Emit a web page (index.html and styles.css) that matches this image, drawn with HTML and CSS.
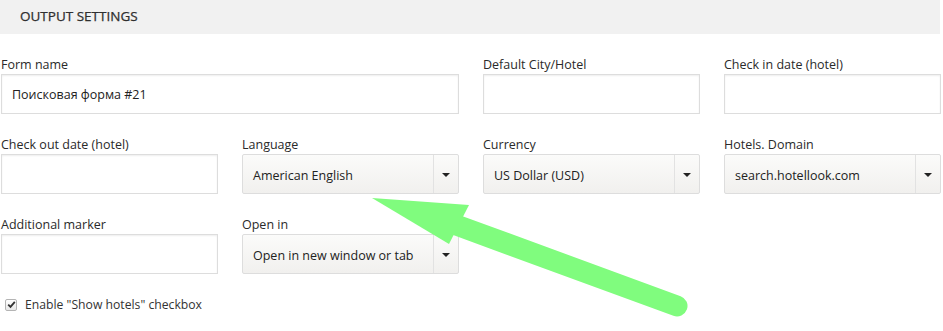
FILE: index.html
```html
<!DOCTYPE html>
<html lang="en">
<head>
  <meta charset="UTF-8" />
  <title>Output settings</title>
  <link rel="stylesheet" href="styles.css">
</head>
<body>
  <div class="panel">
    <div class="panel-head">Output settings</div>

    <div class="fields">
      <div class="field wide">
        <label>Form name</label>
        <input class="text" type="text" value="Поисковая форма #21" />
      </div>
      <div class="field">
        <label>Default City/Hotel</label>
        <input class="text" type="text" />
      </div>
      <div class="field">
        <label>Check in date (hotel)</label>
        <input class="text" type="text" />
      </div>

      <div class="field">
        <label>Check out date (hotel)</label>
        <input class="text" type="text" />
      </div>
      <div class="field">
        <label>Language</label>
        <div class="select"><span>American English</span><b class="caret"></b></div>
      </div>
      <div class="field">
        <label>Currency</label>
        <div class="select"><span>US Dollar (USD)</span><b class="caret"></b></div>
      </div>
      <div class="field">
        <label>Hotels. Domain</label>
        <div class="select"><span>search.hotellook.com</span><b class="caret"></b></div>
      </div>

      <div class="field">
        <label>Additional marker</label>
        <input class="text" type="text" />
      </div>
      <div class="field">
        <label>Open in</label>
        <div class="select"><span>Open in new window or tab</span><b class="caret"></b></div>
      </div>
    </div>

    <label class="check">
      <span class="box">
        <svg width="9" height="9" viewBox="0 0 9 9"><path d="M1.2 4.6 L3.5 6.9 L7.8 1.8" fill="none" stroke="#333" stroke-width="1.8"/></svg>
      </span>
      Enable "Show hotels" checkbox
    </label>
  </div>

  <svg class="pointer" width="943" height="331" viewBox="0 0 943 331">
    <line x1="448" y1="222" x2="677" y2="306" stroke="#80fc7e" stroke-width="21" stroke-linecap="round"/>
    <polygon points="372,198 469,205 449,244" fill="#80fc7e"/>
  </svg>
</body>
</html>
```

FILE: styles.css
```css
body {
  margin: 0;
  background: #fff;
  font-family: "Open Sans", "Liberation Sans", sans-serif;
  font-size: 12px;
  color: #333;
}

.panel {
  width: 943px;
}

.panel-head {
  background: #f1f1f1;
  width: 920px;
  height: 34px;
  line-height: 33px;
  padding-left: 20px;
  text-transform: uppercase;
  font-size: 13.5px;
  color: #2f2f2f;
  -webkit-text-stroke: 0.25px #2f2f2f;
}

.fields {
  display: grid;
  grid-template-columns: repeat(4, 217px);
  column-gap: 24px;
  row-gap: 20px;
  margin-top: 20px;
  padding-left: 1px;
}

.field.wide {
  grid-column: span 2;
}

.field label {
  display: block;
  height: 20px;
  line-height: 22px;
  font-size: 12.5px;
  color: #2a2a2a;
}

.text {
  display: block;
  box-sizing: border-box;
  width: 100%;
  height: 40px;
  margin: 0;
  padding: 0 10px;
  border: 1px solid #ddd;
  box-shadow: inset 0 1px 2px rgba(0, 0, 0, 0.07);
  font-family: inherit;
  font-size: 12.5px;
  color: #222;
  background: #fff;
  outline: none;
}

.select {
  display: flex;
  box-sizing: border-box;
  height: 40px;
  border: 1px solid #ddd;
  border-radius: 2px;
  background: linear-gradient(#fbfbfa, #f1f0ee);
  font-size: 12.5px;
  color: #222;
}

.select span {
  flex: 1;
  line-height: 38px;
  padding: 2px 0 0 10px;
}

.caret {
  width: 24px;
  border-left: 1px solid #e2e2e2;
  display: flex;
  align-items: center;
  justify-content: center;
  padding-top: 2px;
}

.caret::after {
  content: "";
  border-left: 4px solid transparent;
  border-right: 4px solid transparent;
  border-top: 4px solid #222;
}

.check {
  display: flex;
  align-items: center;
  gap: 8px;
  margin-top: 22px;
  padding-left: 5px;
  font-size: 12.2px;
}

.box {
  width: 10px;
  height: 10px;
  border: 1px solid #b4b4b4;
  border-radius: 2px;
  background: linear-gradient(#fff, #e8e8e8);
  display: flex;
  align-items: center;
  justify-content: center;
}

.pointer {
  position: absolute;
  left: 0;
  top: 0;
  pointer-events: none;
}
```
